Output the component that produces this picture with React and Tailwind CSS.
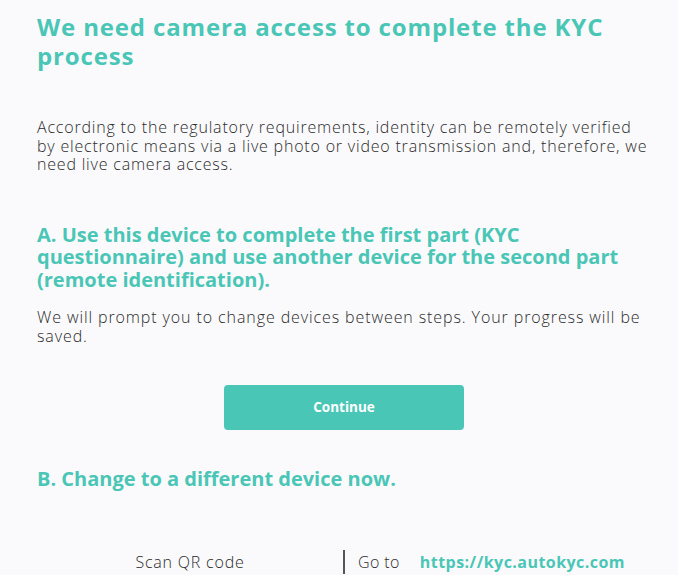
import React from 'react';

const TEAL = 'text-[#4ac6b6]';

function App() {
  return (
    <div className="min-h-screen bg-[#fafafc] px-[37px] pt-[12px] font-['Open_Sans',sans-serif] text-[#2b2b2b]">
      <h1 className={`w-[600px] text-[24px] font-bold leading-[29px] tracking-[0.85px] ${TEAL}`}>
        We need camera access to complete the KYC process
      </h1>

      <p className="mt-[48px] w-[616px] text-[16px] font-light leading-[18.5px] tracking-[0.8px]">
        According to the regulatory requirements, identity can be remotely verified by electronic means via a live photo or video transmission and, therefore, we need live camera access.
      </p>

      <h2 className={`mt-[50px] w-[600px] text-[20px] font-bold leading-[22.5px] ${TEAL}`}>
        A. Use this device to complete the first part (KYC questionnaire) and use another device for the second part (remote identification).
      </h2>

      <p className="mt-[17px] w-[616px] text-[16px] font-light leading-[18.5px] tracking-[0.9px]">
        We will prompt you to change devices between steps. Your progress will be saved.
      </p>

      <div className="mt-[40px] flex w-[614px] justify-center">
        <button className="h-[45px] w-[240px] rounded-[4px] bg-[#4ac6b6] text-[13.5px] font-bold text-white">
          Continue
        </button>
      </div>

      <h2 className={`mt-[38px] text-[20px] font-bold leading-[22.5px] ${TEAL}`}>
        B. Change to a different device now.
      </h2>

      <div className="mt-[59px] flex text-[16px] font-light leading-[24px]">
        <div className="flex w-[306px] justify-center tracking-[0.8px]">Scan QR code</div>
        <div className="flex border-l-2 border-[#555] pl-[13px]">
          <span className="tracking-[0.4px]">Go to</span>
          <span className={`ml-[20px] font-bold tracking-[0.45px] ${TEAL}`}>https://kyc.autokyc.com</span>
        </div>
      </div>
    </div>
  );
}

export default App;
